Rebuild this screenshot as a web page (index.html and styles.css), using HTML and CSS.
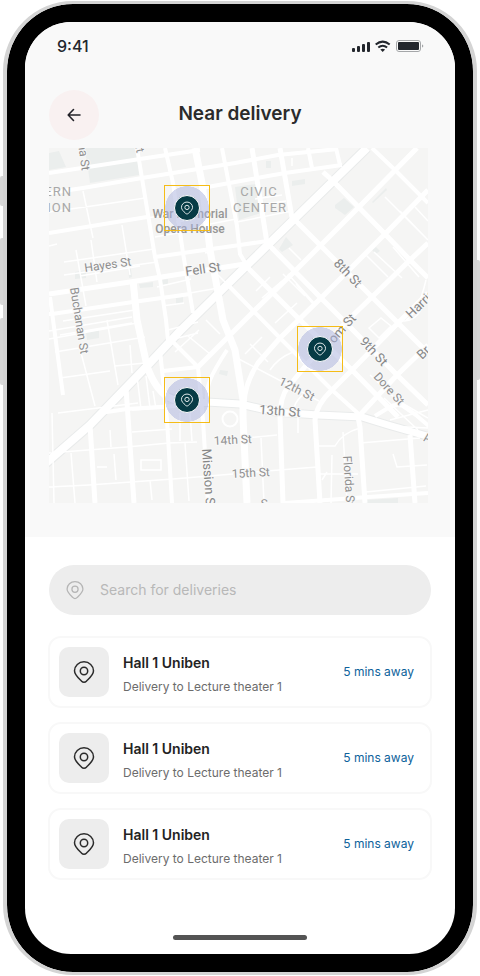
FILE: index.html
```html
<!DOCTYPE html>
<html lang="en">
<head>
<meta charset="utf-8">
<meta name="viewport" content="width=device-width, initial-scale=1">
<title>Near delivery</title>
<link rel="stylesheet" href="styles.css">
</head>
<body>
<svg class="defs" aria-hidden="true">
  <symbol id="pin" viewBox="0 0 24 24">
    <path d="M12 22.200c-.9 0-1.700-.3-2.400-1C6 17.600 2.500 14.800 2.500 10.800a9.500 9 0 0 1 19 0c0 4-3.500 6.800-7.100 10.400-.7.7-1.500 1-2.400 1z"/>
    <circle cx="12" cy="11" r="3.700"/>
  </symbol>
</svg>
<div class="phone">
  <span class="key key-mute"></span><span class="key key-up"></span><span class="key key-down"></span><span class="key key-power"></span>
  <main class="screen">
    <section class="top">
      <div class="status">
        <span class="time">9:41</span>
        <svg class="signals" viewBox="0 0 72 14" aria-hidden="true">
          <g fill="#23272d">
            <rect x="0" y="9" width="3" height="4" rx="1"/><rect x="5" y="7" width="3" height="6" rx="1"/><rect x="10" y="5" width="3" height="8" rx="1"/><rect x="15" y="3" width="3" height="10" rx="1"/>
            <rect x="46" y="3" width="21" height="8" rx="1"/>
          </g>
          <g fill="none" stroke="#23272d" stroke-width="2">
            <path d="M23.700 5.600q7-6 14 0M26.300 8.600q4.400-3.700 8.800 0"/>
          </g>
          <path fill="#23272d" d="M28.300 10.600q2.400-1.900 4.800 0l-2.400 2.400z"/>
          <rect x="44.500" y="1.500" width="24" height="11" rx="2.500" fill="none" stroke="#a5a7a9"/>
          <path d="M70 5.500q1.300.3 1.300 1.500T70 8.500z" fill="#a5a7a9"/>
        </svg>
      </div>
      <header class="bar">
        <button class="back" type="button" aria-label="Back">
          <svg viewBox="0 0 14 14"><path d="M13 7H1.500M6.500 1.500L1.200 7l5.300 5.500"/></svg>
        </button>
        <h1>Near delivery</h1>
      </header>
      <div class="map">
        <svg class="streets" viewBox="49 148 379 355" role="img" aria-label="Street map">
          <rect x="49" y="148" width="379" height="355" fill="#f5f5f4"/>
          <g fill="#ebeeed">
            <path d="M84 148h53l2 27-49 8-3-21zM235 187l21-3 5 29-22 7zM49 153l10-2 7 16-17 3zM292 181l13-2v5l-13 2zM335 205l9-7 10 9-9 8-10-7zM279 249l7-12 7 8-11 7zM372 202l14-14 1 2-14 13zM75 272l11-2v8l-11 1zM128 263l2-1 2 15-3 1zM139 284l14-2v5l-13 1zM161 280l7-1v5l-7 1zM176 298l7-1v6l-7 1zM86 332l13-2v8l-12 2zM220 370l8 1-1 5-8-2zM365 500l33-2v5h-33zM266 161h5v7h-5zM372 250l4-3 4 4-4 3z"/>
          </g>
          <g fill="none" stroke="#e9ebeb">
            <path stroke-width="10" d="M367 148L235 277 180 331 147 366 90 425 45 464"/>
            <path stroke-width="9" d="M168 397Q184 403 207 402L240 404 275 412 318 415 362 417 388 425 430 437"/>
          </g>
          <g fill="none" stroke="#fff" stroke-width="1.500">
            <path d="M49 212l50-7 46-7M83 191l10 47M122 225l8 50M49 246l8-2M64 262l90-13M64 275l93-13M76 250l10 56M91 240l6 42M49 331l83-14M80 276l60-10M49 339l88-16M63 321l72-11M60 335l12-2 60-10M55 352l90-15M107 320l11 65M60 378l50-7M80 349l15 57M115 366l30-3M58 413l80-10M130 345l2 28M49 453l78-6 42-4 28-1M49 487l40-2 84-6 60-5M71 453l4 50M110 430l1 17M114 454l2 26M52 413l2 90M141 460h20v10h-20zM150 480l2 20M137 376l4 33M146 376l4 32M153 391l3 18M132 410l36-2M132 432l40-3M97 467h10M180 413v28M190 413l2 28M185 443l4 58M168 330l30-8M170 340l28-7M175 352l24-22M188 336l22 18-12 12-16-16"/>
            <path d="M147 218l25-4M155 237l28-5M157 287l34-8M190 293l28-5M162 306l22-3M205 225l31-6M176 222l8-1M205 253l8-2M206 320l14 14M218 275l14 14M228 285l7 8M237 222l55-11M258 205l28-4M255 199l27-4M292 158v8M385 197l43 43M400 211l26 27M415 207l13 14M366 255l22 22M374 252l28 26M393 247l26 30M289 248l12 12M256 291l14-14M262 298l20-17M283 274l22 22M288 274l28 31M296 284l17 20M275 323l22-20M250 344l18 18M245 354l17-17M235 357l84 44M270 370q8-12 23-18M298 413v20M294 408q2-9 12-15M246 438l31-3M240 473l77-6M261 438l3 65M285 416l28-2M319 446h16q7-13 25-18M332 455l-1 48M343 432l4 70M360 443l60-5M370 375l30 28M393 454l4 13 30-2M366 492l60-6M322 480l5-8M320 474h38M369 328l12-10 10 8-12 12zM398 320q15 4 23-10M426 280q-8 34-20 40M384 398l34 32M390 420l38-10M388 426l40 2M402 403l26 15"/>
          </g>
          <circle cx="230" cy="419" r="7.500" fill="none" stroke="#fff" stroke-width="2"/>
          <g fill="none" stroke="#fff" stroke-width="4" stroke-linejoin="round">
            <path d="M49 173l91-14 60-9M49 193l34-5 59-10 93-15 43-8 60-6M202 188l33-6 50-9 57-8M49 233l98-16M155 257l28-4 57-8 27-4M49 314l3 0 81-12 57-8"/>
            <path d="M137 148l18 109 5 22 6 41 2 20M165 148l8 35 10 70 10 60M222 148l15 78 3 28 7 12M308 148l4 20M336 148l4 17M50 297l13 98M173 342l25 25-35 4M198 367l5 53 5 83M160 350l7 70 5 83M227 350q-13 20-17 30t-3 20"/>
            <path d="M372 148l23 22 33 33M228 285l52 53 52 52 30 27M375 416l13-8q8-5 15-2l13 9 14 12M285 503l83-6 60-4M100 413l27-4 80-5"/>
          </g>
          <g fill="none" stroke="#fff" stroke-width="5" stroke-linejoin="round">
            <path d="M49 294l81-12 57-9 58-9M252 148l15 95M280 148l12 70M417 148l-59 60-64 64-41 40-55 55M428 190l-43 44-64 64-41 40-22 25q-13 20-14 40M428 243l-18 17-38 37-24 23-40 43-20 24q-8 10-8 30l3 86M428 293l-30 30-46 47-20 20q-16 15-17 30l5 83M428 345l-31 30-39 42 2 10 5 76M323 172l9 8 53 54 25 26 18 18M293 218l79 79 26 26 30 30M267 243l54 55 27 27 49 50 31 30M245 265l28 28 25 25 54 52 46 47M90 425l5 78M126 388l8 115M410 435l5 68"/>
          </g>
          <g fill="none" stroke="#fff" stroke-linejoin="round">
            <path stroke-width="7" d="M195 148l7 35 8 67 7 37 6 33 12 30 8 50v17l4 86"/>
            <path stroke-width="7" d="M133 280l4 40 10 46q8 23 21 31 12 7 39 5l33 2 35 8 43 3 44 2 26 8 42 12"/>
            <path stroke-width="8" d="M367 148L235 277 180 331 147 366 90 425 45 464"/>
          </g>
          <g class="road-names">
            <text transform="translate(78 144) rotate(82)">na St</text>
            <text transform="translate(134 143) rotate(75)">nt</text>
            <text transform="translate(85 272) rotate(-8)">Hayes St</text>
            <text class="major" transform="translate(186 276) rotate(-8)">Fell St</text>
            <text transform="translate(70 288) rotate(81)">Buchanan St</text>
            <text class="major" transform="translate(333 264) rotate(46)">8th St</text>
            <text class="major" transform="translate(359 342) rotate(47)">9th St</text>
            <text transform="translate(373 377) rotate(48)">Dore St</text>
            <text transform="translate(278 384) rotate(27)">12th St</text>
            <text class="major" transform="translate(259 414) rotate(4)">13th St</text>
            <text transform="translate(214 445) rotate(-3)">14th St</text>
            <text transform="translate(232 478) rotate(-3)">15th St</text>
            <text class="major" transform="translate(202 449) rotate(86)">Mission St</text>
            <text transform="translate(343 456) rotate(86)">Florida St</text>
            <text class="major" transform="translate(411 319) rotate(-44)">Harris</text>
            <text class="major" transform="translate(422 360) rotate(-44)">Br</text>
            <text class="major" transform="translate(334 344) rotate(-48)">om St</text>
            <text transform="translate(423 441) rotate(10)">A</text>
            <text transform="translate(261 508) rotate(-3)">S</text>
          </g>
          <g class="districts">
            <text x="72" y="196" text-anchor="end">ERN</text>
            <text x="72" y="212" text-anchor="end">ION</text>
            <text x="259" y="196" text-anchor="middle">CIVIC</text>
            <text x="260" y="212" text-anchor="middle">CENTER</text>
          </g>
          <g class="landmark">
            <text x="190" y="218">War Memorial</text>
            <text x="190" y="233">Opera House</text>
          </g>
        </svg>
        <span class="marker marker-opera"><span><svg><use href="#pin"/></svg></span></span>
        <span class="marker marker-folsom"><span><svg><use href="#pin"/></svg></span></span>
        <span class="marker marker-mission"><span><svg><use href="#pin"/></svg></span></span>
      </div>
    </section>
    <section class="content">
      <label class="search">
        <svg><use href="#pin"/></svg>
        <input type="search" placeholder="Search for deliveries" aria-label="Search for deliveries">
      </label>
      <ul class="deliveries">
        <li>
          <span class="tile"><svg><use href="#pin"/></svg></span>
          <div class="info"><h2>Hall 1 Uniben</h2><p>Delivery to Lecture theater 1</p></div>
          <span class="eta">5 mins away</span>
        </li>
        <li>
          <span class="tile"><svg><use href="#pin"/></svg></span>
          <div class="info"><h2>Hall 1 Uniben</h2><p>Delivery to Lecture theater 1</p></div>
          <span class="eta">5 mins away</span>
        </li>
        <li>
          <span class="tile"><svg><use href="#pin"/></svg></span>
          <div class="info"><h2>Hall 1 Uniben</h2><p>Delivery to Lecture theater 1</p></div>
          <span class="eta">5 mins away</span>
        </li>
      </ul>
      <div class="home"></div>
    </section>
  </main>
</div>
</body>
</html>
```
FILE: styles.css
```css
* { box-sizing: border-box; }
body {
  margin: 0;
  padding: 1px 3px;
  background: #fff;
  font-family: Inter, "Liberation Sans", sans-serif;
  color: #232323;
}
h1, h2, p, ul { margin: 0; padding: 0; }
svg { display: block; }
.defs { position: absolute; width: 0; height: 0; }

.phone {
  position: relative;
  display: flex;
  max-width: 474px;
  min-height: calc(100vh - 2px);
  margin: 0 auto;
  padding: 18px;
  border: 3px solid #d4d4d4;
  border-width: 3px 4px;
  border-radius: 70px;
  background: #000;
  background-clip: padding-box;
}
.key {
  position: absolute;
  width: 3px;
  border-radius: 2px 0 0 2px;
  background: #d8d8d8;
}
.key-mute { left: -7px; top: 172px; height: 30px; }
.key-up { left: -7px; top: 234px; height: 67px; }
.key-down { left: -7px; top: 314px; height: 67px; }
.key-power { right: -7px; top: 256px; height: 120px; border-radius: 0 2px 2px 0; }

.screen {
  flex: 1;
  display: flex;
  flex-direction: column;
  min-width: 0;
  border-radius: 46px;
  overflow: hidden;
  background: #fff;
}
.top { padding: 0 24px 34px; background: #f9f9f9; }
.status {
  display: flex;
  align-items: center;
  justify-content: space-between;
  height: 48px;
  padding: 0 7px 0 8px;
}
.time { font-size: 16px; font-weight: 500; color: #23272d; }
.signals { width: 72px; height: 14px; }
.bar {
  display: grid;
  grid-template-columns: 50px 1fr 50px;
  align-items: center;
  margin: 20px 0 8px;
}
.back {
  display: grid;
  place-items: center;
  width: 50px;
  height: 50px;
  padding: 0;
  border: 0;
  border-radius: 50%;
  background: #f9f1f1;
}
.back svg {
  width: 14px;
  height: 14px;
  fill: none;
  stroke: #232329;
  stroke-width: 1.600;
  stroke-linecap: round;
  stroke-linejoin: round;
}
h1 {
  padding-bottom: 2px;
  font-size: 19px;
  line-height: 24px;
  font-weight: 600;
  text-align: center;
  color: #2b2b2b;
}

.map { position: relative; margin-right: 3px; }
.streets { width: 100%; height: auto; }
.road-names {
  font: 12px Roboto, "Liberation Sans", sans-serif;
  fill: #8f8f8f;
  stroke: #f8f8f8;
  stroke-width: 2px;
  paint-order: stroke;
}
.road-names .major { font-size: 13px; fill: #868686; }
.districts {
  font: 13px Roboto, "Liberation Sans", sans-serif;
  letter-spacing: 1px;
  fill: #a8a8a8;
}
.landmark {
  font: 500 12px Roboto, "Liberation Sans", sans-serif;
  text-anchor: middle;
  fill: #969696;
}
.marker {
  position: absolute;
  display: grid;
  place-items: center;
  width: 46px;
  height: 46px;
  border: 1px solid #f5bc16;
  background: radial-gradient(circle closest-side, rgba(169, 177, 221, .5) 98%, transparent);
}
.marker span {
  display: grid;
  place-items: center;
  width: 26px;
  height: 26px;
  border: 1px solid #fff;
  border-radius: 50%;
  background: #063b45;
}
.marker svg { width: 14px; height: 14px; fill: none; stroke: #e2eaeb; stroke-width: 1.700; }
.marker-opera { left: 30.300%; top: 10.400%; }
.marker-folsom { left: 65.400%; top: 50.100%; }
.marker-mission { left: 30.300%; top: 64.500%; }

.content {
  flex: 1;
  display: flex;
  flex-direction: column;
  padding: 28px 24px 14px;
}
.search {
  display: flex;
  align-items: center;
  gap: 15px;
  height: 50px;
  padding: 0 16px;
  border-radius: 25px;
  background: #ededed;
}
.search svg { width: 20px; height: 20px; fill: none; stroke: #b5b5b5; stroke-width: 1.500; }
.search input {
  flex: 1;
  min-width: 0;
  padding: 0;
  border: 0;
  outline: 0;
  background: none;
  font: 14px/20px Inter, "Liberation Sans", sans-serif;
  color: #232323;
}
.search input::placeholder { color: #b8b8b8; opacity: 1; }
.deliveries {
  display: grid;
  gap: 14px;
  margin: 21px -1px 0;
  list-style: none;
}
.deliveries li {
  display: flex;
  align-items: center;
  gap: 14px;
  height: 72px;
  padding: 0 16px 0 9px;
  border: 2px solid #f8f8f8;
  border-radius: 13px;
}
.tile {
  display: grid;
  place-items: center;
  width: 50px;
  height: 50px;
  border-radius: 10px;
  background: #ededed;
}
.tile svg { width: 24px; height: 24px; fill: none; stroke: #2b2b2b; stroke-width: 1.500; }
.info { flex: 1; min-width: 0; padding-top: 6px; }
h2 { font-size: 14px; line-height: 24px; font-weight: 600; }
p { font-size: 12px; line-height: 24px; color: #6c6c6c; }
.eta { font-size: 12px; line-height: 20px; color: #0d629b; }
.home {
  align-self: center;
  width: 134px;
  height: 5px;
  margin-top: auto;
  border-radius: 3px;
  background: #545454;
}
```
